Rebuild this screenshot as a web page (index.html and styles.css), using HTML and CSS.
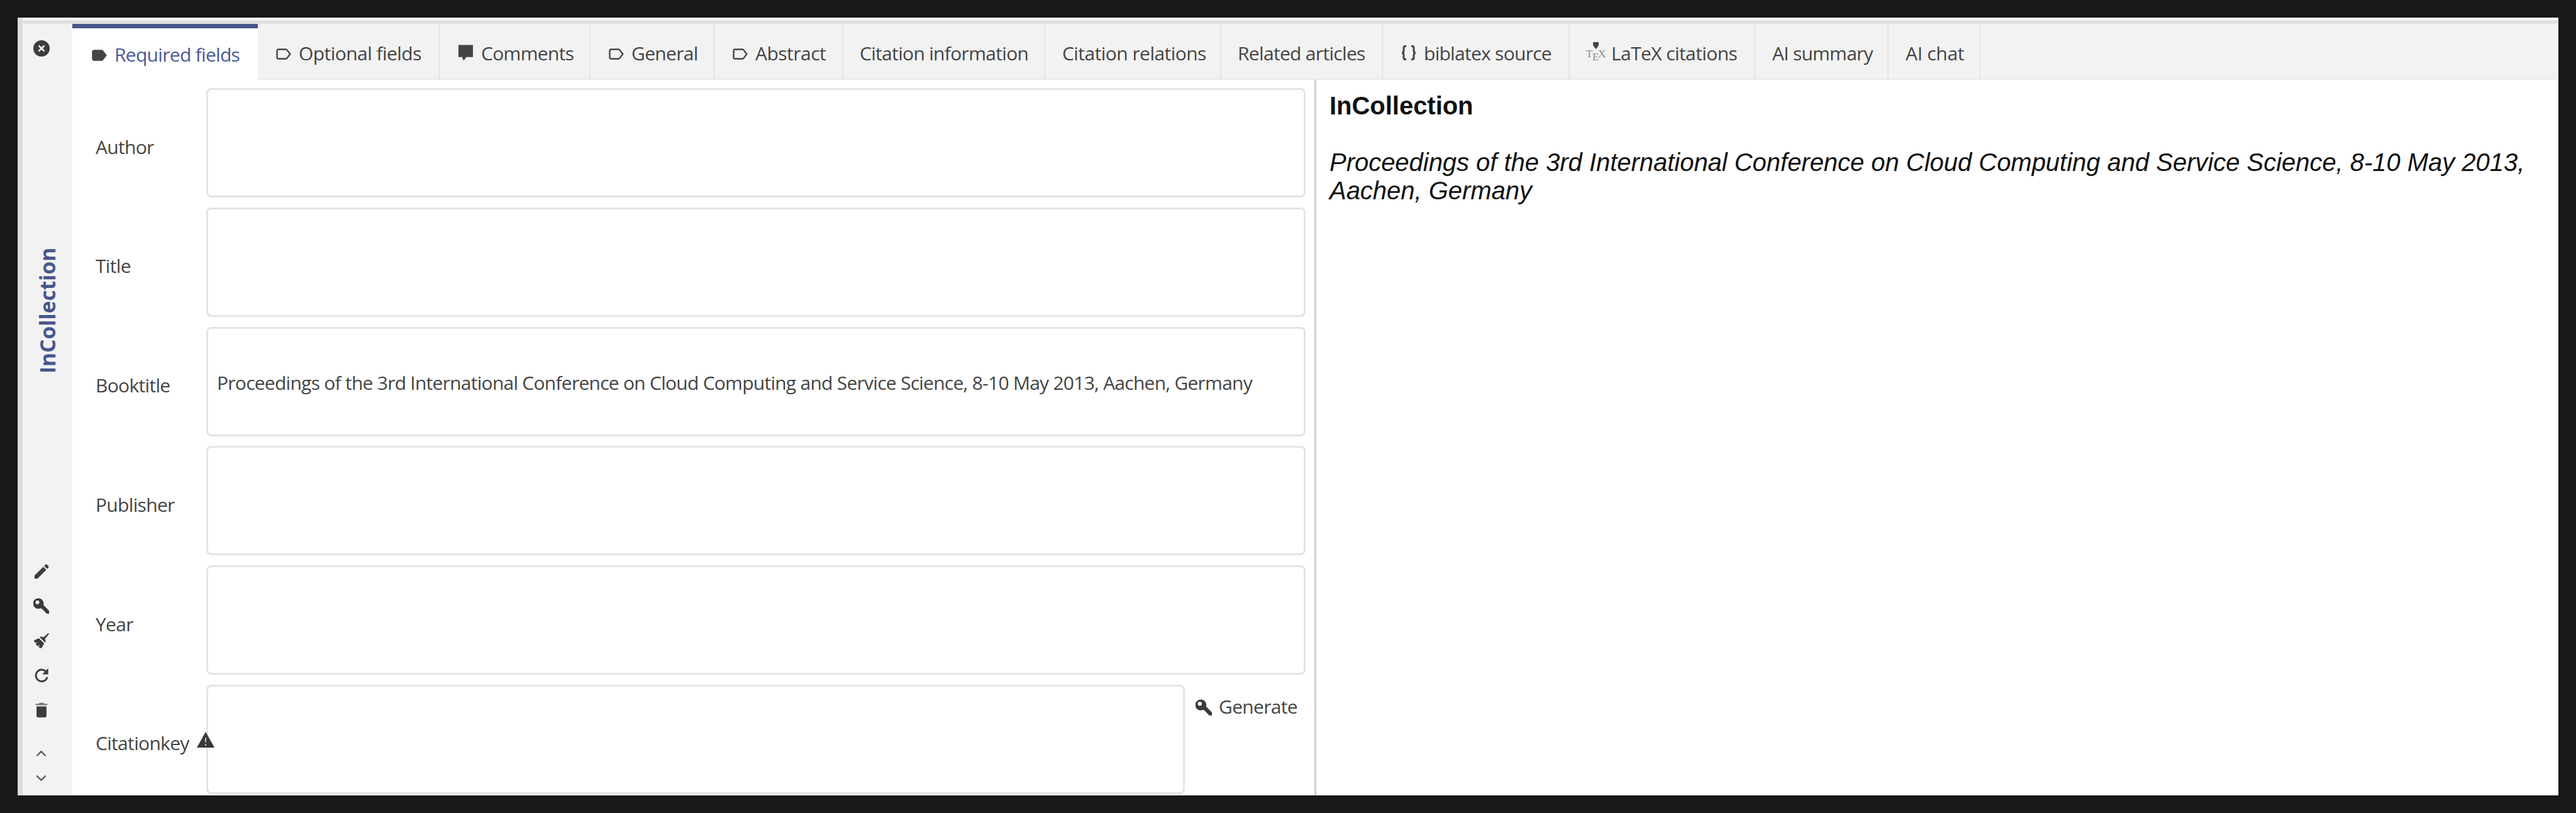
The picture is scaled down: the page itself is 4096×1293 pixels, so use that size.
FILE: index.html
```html
<!DOCTYPE html>
<html lang="en">
<head>
<meta charset="utf-8">
<title>Entry editor</title>
<link rel="stylesheet" href="styles.css">
</head>
<body>
<svg class="defs" width="0" height="0" aria-hidden="true">
  <symbol id="tag" viewBox="0 0 24 18"><path d="M3.5 1.500h12.200a2 2 0 0 1 1.600.9L22.300 9l-5 6.600a2 2 0 0 1-1.600.9H3.500a2 2 0 0 1-2-2v-11a2 2 0 0 1 2-2z" stroke="currentColor" stroke-width="2.400"/></symbol>
  <symbol id="key" viewBox="0 0 28 28"><path fill-rule="evenodd" d="M9 0.500a9 9 0 1 0 3.200 17.200l2.300.7 8.300 8.600H27v-5.200L17.400 12A9 9 0 0 0 9 .5zM7 4.200a3.300 3.300 0 1 1 0 6.600 3.300 3.300 0 0 1 0-6.600z" fill="currentColor"/></symbol>
</svg>
<div class="window">
  <div class="edge"></div>
  <div class="editor">
    <aside class="sidebar">
      <svg class="close" viewBox="0 0 26 26"><circle cx="13" cy="13" r="13" fill="#3c3c3c"/><path d="M8.500 8.500l9 9M17.500 8.500l-9 9" stroke="#f2f2f2" stroke-width="2.600"/></svg>
      <div class="type"><span>InCollection</span></div>
      <div class="tools">
        <svg viewBox="0 0 28 28"><path d="M2 26v-5.200L17 5.800l5.200 5.200-15 15zM18.500 4.400l2.400-2.400a1.600 1.600 0 0 1 2.200 0l2.900 2.900a1.600 1.600 0 0 1 0 2.200l-2.400 2.400z" fill="currentColor"/></svg>
        <svg viewBox="0 0 28 28"><use href="#key"/></svg>
        <svg viewBox="0 0 28 28"><path d="M25.500 1l1.500 1.500-7.200 8.200c1.700 2.600 1.600 5 .3 6.500L11 8c1.700-1.500 4-1.300 6.300.2zM9.500 9.600l9 9L14 27c-2-.2-3.800-1.200-5.300-2.400l3-3.600-4.600 2.200c-1.300-1.300-2.300-2.600-3-4l3.200-2.600-4 1.200C2.300 16.500 1.500 15 1 13.500z" fill="currentColor"/></svg>
        <svg viewBox="0 0 28 28"><path d="M22.500 8.500A10 10 0 1 0 24 17" fill="none" stroke="currentColor" stroke-width="3"/><path d="M25.500 2v10.500H15z" fill="currentColor"/></svg>
        <svg viewBox="0 0 28 28"><path d="M5.500 8h17v16a3 3 0 0 1-3 3h-11a3 3 0 0 1-3-3z" fill="currentColor"/><path d="M4 6V3.500h5.200L10.800 2h6.400l1.600 1.500H24V6z" fill="#777"/></svg>
      </div>
      <div class="arrows">
        <svg viewBox="0 0 18 12"><path d="M1.500 10.500L9 3l7.500 7.500"/></svg>
        <svg viewBox="0 0 18 12"><path d="M1.500 1.500L9 9l7.500-7.500"/></svg>
      </div>
    </aside>
    <main class="content">
      <nav class="tabs">
        <div class="tab required active"><svg class="tag solid"><use href="#tag"/></svg><span>Required fields</span></div>
        <div class="tab optional"><svg class="tag"><use href="#tag"/></svg><span>Optional fields</span></div>
        <div class="tab comments"><svg class="bubble" viewBox="0 0 26 26"><path d="M1 0h24v20H14l-4.500 6L7 20H1z" fill="currentColor"/></svg><span>Comments</span></div>
        <div class="tab general"><svg class="tag"><use href="#tag"/></svg><span>General</span></div>
        <div class="tab abstract"><svg class="tag"><use href="#tag"/></svg><span>Abstract</span></div>
        <div class="tab info"><span>Citation information</span></div>
        <div class="tab relations"><span>Citation relations</span></div>
        <div class="tab related"><span>Related articles</span></div>
        <div class="tab source"><svg class="braces" viewBox="0 0 26 24"><path d="M9 1.500H7.500Q5 1.500 5 4v4.500Q5 12 2 12q3 0 3 3.500V20q0 2.500 2.500 2.500H9M17 1.500h1.500Q21 1.500 21 4v4.500Q21 12 24 12q-3 0-3 3.500V20q0 2.500-2.500 2.500H17"/></svg><span>biblatex source</span></div>
        <div class="tab latex"><svg class="tex" viewBox="0 0 32 32"><path d="M11 1h9v5l-3.500 5.500H15L11 6z" fill="#444"/><text x="0" y="25" class="glyph">T</text><text x="10" y="30" class="glyph">E</text><text x="19" y="25" class="glyph">X</text></svg><span>LaTeX citations</span></div>
        <div class="tab summary"><span>AI summary</span></div>
        <div class="tab chat"><span>AI chat</span></div>
      </nav>
      <div class="panes">
        <section class="form">
          <div class="row"><label>Author</label><div class="box"></div></div>
          <div class="row"><label>Title</label><div class="box"></div></div>
          <div class="row"><label>Booktitle</label><div class="box">Proceedings of the 3rd International Conference on Cloud Computing and Service Science, 8-10 May 2013, Aachen, Germany</div></div>
          <div class="row"><label>Publisher</label><div class="box"></div></div>
          <div class="row"><label>Year</label><div class="box"></div></div>
          <div class="row"><label>Citationkey<svg class="warn" viewBox="0 0 28 25"><path d="M14 0l14 25H0z" fill="#383838"/><path d="M14 9v7.500M14 19v3" stroke="#bbb" stroke-width="2.200"/></svg></label><div class="box"></div><div class="generate"><svg viewBox="0 0 28 28"><use href="#key"/></svg><span>Generate</span></div></div>
        </section>
        <section class="preview">
          <h1>InCollection</h1>
          <p>Proceedings of the 3rd International Conference on Cloud Computing and Service Science, 8-10 May 2013,<br>Aachen, Germany</p>
        </section>
      </div>
    </main>
  </div>
</div>
</body>
</html>
```
FILE: styles.css
```css
* { box-sizing: border-box; }
html, body { margin: 0; height: 100%; }
body {
  background: #181818;
  padding: 28px;
  width: 4096px;
  height: 1293px;
  overflow: hidden;
  font-family: "Open Sans", "Noto Sans", sans-serif;
  font-size: 30px;
  letter-spacing: -0.68px;
  color: #444;
}
svg { display: block; flex: none; }
.defs { position: absolute; }
.window {
  display: flex;
  flex-direction: column;
  height: 1237px;
  background: #fff;
  border-left: 8px solid #dcdcdc;
  overflow: hidden;
}
.edge {
  flex: none;
  height: 10px;
  background: linear-gradient(#fff 0 25%, #dcdcdc 60% 80%, #ececec);
}
.editor { display: flex; flex: 1; }
.sidebar {
  width: 79px;
  background: #f2f2f2;
  display: flex;
  flex-direction: column;
  padding: 26px 0 0 17px;
  color: #3c3c3c;
}
.close { width: 26px; height: 26px; }
.type {
  width: 40px;
  height: 200px;
  margin: 304px 0 0 2px;
  writing-mode: vertical-rl;
  transform: rotate(180deg);
  font-size: 33.500px;
  line-height: 40px;
  letter-spacing: 0;
  font-weight: 700;
  color: #47568c;
  white-space: nowrap;
}
.tools {
  display: flex;
  flex-direction: column;
  gap: 29px;
  margin-top: 302px;
}
.tools svg { width: 26px; height: 26px; }
.arrows { margin: 50px 0 0 4px; display: flex; flex-direction: column; gap: 28px; }
.arrows svg { width: 17px; height: 12px; fill: none; stroke: #555; stroke-width: 2.400; }

.content { flex: 1; display: flex; flex-direction: column; }
.tabs { display: flex; height: 89px; background: #f2f2f2; border-bottom: 2px solid #ececec; }
.tab {
  display: flex;
  align-items: center;
  height: 89px;
  padding: 5px 0 0 29px;
  border-right: 2px solid #e4e4e4;
  border-bottom: 2px solid #e9e9e9;
  white-space: nowrap;
}
.tab.active {
  padding: 0 0 0 31px;
  background: #fff;
  color: #4a5a94;
  border-top: 7px solid #47568c;
  border-right: 0;
  border-bottom: 0;
}
.tag { width: 24px; height: 18px; margin: 3px 12px 0 0; fill: none; color: #444; }
.tag.solid { fill: currentColor; }
.bubble { width: 25px; height: 26px; margin-right: 12px; }
.braces { width: 26px; height: 24px; margin-right: 11px; fill: none; stroke: #444; stroke-width: 3; }
.tex { width: 32px; height: 32px; margin: -4px 8px 0 0; overflow: visible; }
.glyph { font-family: "Liberation Serif", serif; font-size: 17px; letter-spacing: 0; fill: #888; }
.tab.required { width: 295px; letter-spacing: -0.7px; }
.tab.optional { width: 289px; letter-spacing: -0.55px; }
.tab.comments { width: 240px; }
.tab.general { width: 197px; }
.tab.abstract { width: 205px; letter-spacing: -0.5px; }
.tab.info { width: 321px; padding-left: 26px; }
.tab.relations { width: 280px; padding-left: 27px; letter-spacing: -0.55px; }
.tab.related { width: 257px; padding-left: 26px; }
.tab.source { width: 297px; padding-left: 28px; letter-spacing: -0.72px; }
.tab.latex { width: 295px; padding-left: 26px; letter-spacing: -0.6px; }
.tab.summary { width: 212px; padding-left: 27px; letter-spacing: -0.75px; }
.tab.chat { width: 146px; padding-left: 27px; letter-spacing: -0.3px; }

.panes { flex: 1; display: flex; }
.form {
  width: 1978px;
  border-right: 3px solid #d0d0d0;
  padding: 13px 14px 0 37px;
  display: flex;
  flex-direction: column;
  gap: 15.750px;
}
.row { display: flex; height: 174px; }
label { width: 176px; flex: none; display: flex; align-items: center; padding-top: 12px; white-space: nowrap; }
.box {
  flex: 1;
  display: flex;
  align-items: center;
  padding: 3px 0 0 14px;
  border: 3px solid #e4e4e4;
  border-radius: 8px;
  background: #fff;
  letter-spacing: -0.74px;
  white-space: nowrap;
}
.warn { width: 28px; height: 25px; margin: -11px -20px 0 12px; z-index: 1; }
.generate { width: 192px; display: flex; align-items: center; align-self: flex-start; padding: 14px 0 0 17px; }
.generate svg { width: 27px; height: 27px; margin: 4px 10px 0 0; color: #3c3c3c; }

.preview {
  flex: 1;
  padding: 19px 20px 0 21px;
  font-family: "Liberation Sans", Arial, sans-serif;
  font-size: 40px;
  line-height: 45px;
  letter-spacing: -0.03px;
  color: #111;
}
h1 { font-size: 40px; line-height: 45px; margin: 0 0 45px; }
p { margin: 0; font-style: italic; }
```
